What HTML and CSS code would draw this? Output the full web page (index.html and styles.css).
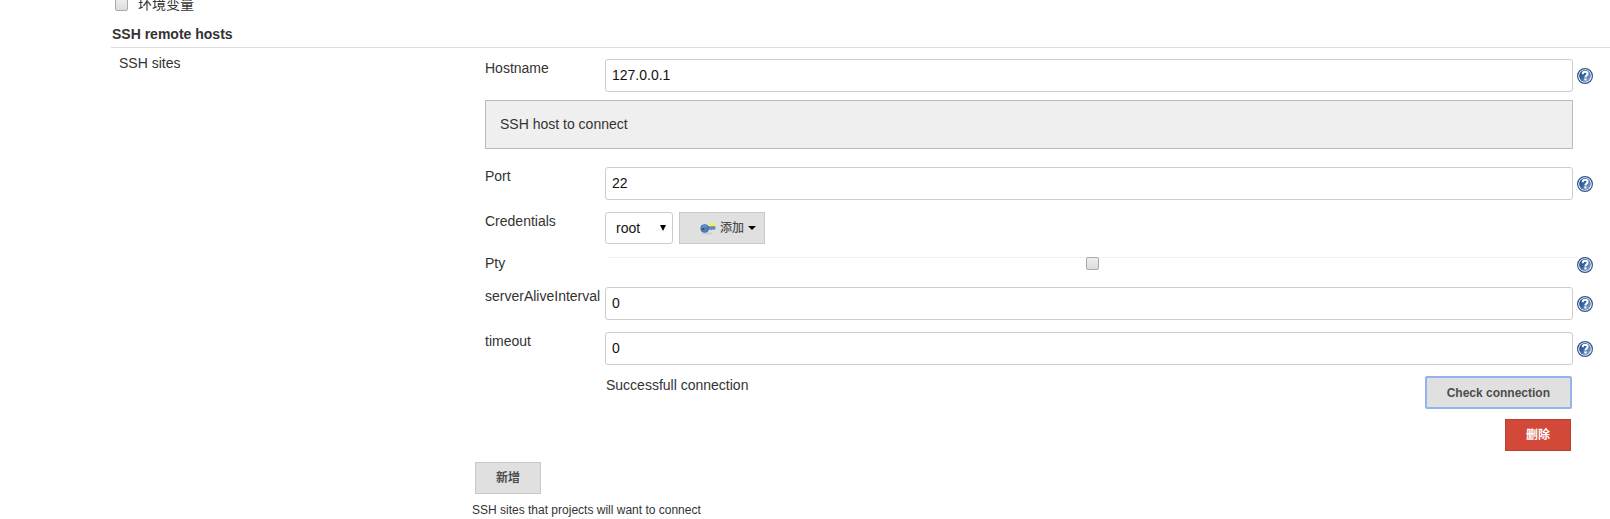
FILE: index.html
```
<!DOCTYPE html>
<html lang="zh-CN">
<head>
<meta charset="utf-8">
<title>SSH remote hosts</title>
<link rel="stylesheet" href="styles.css">
</head>
<body>
<svg class="defs" aria-hidden="true">
  <defs>
    <linearGradient id="disc" x1="0" y1="0" x2="1" y2="1">
      <stop offset="0.2" stop-color="#234f8c"/>
      <stop offset="0.5" stop-color="#426ca5"/>
      <stop offset="1" stop-color="#a3bbdb"/>
    </linearGradient>
    <symbol id="help" viewBox="0 0 16 16">
      <circle cx="8" cy="8" r="7.4" fill="#fff" stroke="#2c5591" stroke-width="1.2"/>
      <circle cx="8" cy="8" r="5.9" fill="url(#disc)"/>
      <path d="M5.600 6.200C5.700 4.600 6.700 3.800 8.100 3.800c1.500 0 2.500.8 2.500 2.100 0 1.600-2.200 1.700-2.200 3.500" fill="none" stroke="#fff" stroke-width="2"/>
      <path d="M7.300 10.400h2.200v2H7.300z" fill="#fff"/>
    </symbol>
  </defs>
</svg>
<main class="config">
  <label class="env"><input class="check" type="checkbox"><span>环境变量</span></label>
  <h2 class="section-title">SSH remote hosts</h2>
  <div class="section">
    <div class="section-name">SSH sites</div>
    <div class="sites">
      <div class="site">
        <div class="row">
          <label class="name" for="hostname">Hostname</label>
          <input class="text" id="hostname" type="text" value="127.0.0.1">
          <button class="help" type="button" aria-label="Help: Hostname"><svg><use href="#help"/></svg></button>
        </div>
        <div class="help-text">SSH host to connect</div>
        <div class="row">
          <label class="name" for="port">Port</label>
          <input class="text" id="port" type="text" value="22">
          <button class="help" type="button" aria-label="Help: Port"><svg><use href="#help"/></svg></button>
        </div>
        <div class="row">
          <label class="name" for="credentials">Credentials</label>
          <div class="credentials">
            <div class="picker">
              <select class="select" id="credentials"><option>root</option></select>
              <svg class="picker-arrow" viewBox="0 0 6 6" aria-hidden="true"><path d="M0 0h6L3 6z"/></svg>
            </div>
            <button class="button add" type="button">
              <svg class="key" viewBox="0 0 16 16" aria-hidden="true">
                <ellipse cx="7" cy="13.500" rx="5.500" ry="1.200" fill="#cfcfcf"/>
                <path d="M9.500 2l1.800 1.200L13 1.500l.6 2.200 2.200.3-1.300 2 .8 2-3-.7-2 .9-.4-2.500-1.500-1.200z" fill="#f3ec6b"/>
                <path d="M7 6.700h8v2l-1 1-1.200-.8-1.300.9-1.200-.5H7z" fill="#5d8fc9" stroke="#41699f" stroke-width=".6"/>
                <circle cx="4.700" cy="8.500" r="4" fill="#4c7dba" stroke="#3b659d" stroke-width=".6"/>
                <path d="M2.500 7.200c1-1.500 3-1.700 4.200-.7" fill="none" stroke="#8db4e0"/>
                <circle cx="3" cy="9" r="1" fill="#2d5182"/>
              </svg>
              <span>添加</span>
              <svg class="caret" viewBox="0 0 8 4" aria-hidden="true"><path d="M0 0h8L4 4z"/></svg>
            </button>
          </div>
        </div>
        <div class="row pty">
          <label class="name" for="pty">Pty</label>
          <div class="pty-field"><input class="check" id="pty" type="checkbox"></div>
          <button class="help" type="button" aria-label="Help: Pty"><svg><use href="#help"/></svg></button>
        </div>
        <div class="row">
          <label class="name" for="alive">serverAliveInterval</label>
          <input class="text" id="alive" type="text" value="0">
          <button class="help" type="button" aria-label="Help: serverAliveInterval"><svg><use href="#help"/></svg></button>
        </div>
        <div class="row">
          <label class="name" for="timeout">timeout</label>
          <input class="text" id="timeout" type="text" value="0">
          <button class="help" type="button" aria-label="Help: timeout"><svg><use href="#help"/></svg></button>
        </div>
        <div class="actions">
          <output class="status">Successfull connection</output>
          <button class="button focused" type="button">Check connection</button>
        </div>
        <div class="remove"><button class="button danger" type="button">删除</button></div>
      </div>
      <button class="button new" type="button">新增</button>
      <p class="note">SSH sites that projects will want to connect</p>
    </div>
  </div>
</main>
</body>
</html>
```
FILE: styles.css
```
* { box-sizing: border-box; }

body {
  margin: 0;
  background: #fff;
  color: #333;
  font: 14px/18px "Liberation Sans", "Noto Sans CJK SC", Arial, sans-serif;
  overflow: hidden;
}

input, select, button { margin: 0; font-family: inherit; }

.defs { position: absolute; width: 0; height: 0; }

.config { margin: -6px 0 0 111px; }

.env {
  display: flex;
  align-items: center;
  gap: 10px;
  height: 20px;
  padding-left: 4px;
}

.check {
  appearance: none;
  display: block;
  width: 13px;
  height: 13px;
  border: 1px solid #aaa;
  border-radius: 2px;
  background: linear-gradient(#eee, #dcdcdc);
}

.check:checked { background: #4d7ebb; }

.section-title {
  margin: 0;
  padding: 11px 1px 4px;
  border-bottom: 1px solid #ddd;
  font-size: 14px;
  line-height: 18px;
}

.section {
  display: grid;
  grid-template-columns: 361px 1fr;
}

.section-name { padding: 6px 8px; }

.sites { padding-top: 11px; }

.site {
  display: flex;
  flex-direction: column;
  gap: 12px;
  padding-left: 13px;
}

.row {
  display: grid;
  grid-template-columns: 120px 1fr 16px;
  padding-right: 17px;
  align-items: start;
}

.text {
  width: calc(100% - 4px);
  height: 33px;
  padding: 0 6px 2px;
  border: 1px solid #ccc;
  border-radius: 3px;
  background: #fff;
  color: #111;
  font-size: 14px;
}

.help {
  display: block;
  align-self: center;
  width: 16px;
  height: 16px;
  padding: 0;
  border: 0;
  background: none;
}

.help svg { display: block; width: 16px; height: 16px; }

.help-text {
  margin: -4px 37px 6px 0;
  padding: 14px;
  border: 1px solid #bbb;
  background: #efefef;
  line-height: 19px;
}

.credentials { display: flex; gap: 6px; }

.picker { position: relative; }

.select {
  appearance: none;
  display: block;
  width: 68px;
  height: 32px;
  padding: 0 10px;
  border: 1px solid #ccc;
  border-radius: 3px;
  background: #fff;
  color: #111;
  font-size: 14px;
}

.picker-arrow {
  position: absolute;
  top: 13px;
  right: 7px;
  width: 6px;
  height: 6px;
  pointer-events: none;
}

.button {
  height: 32px;
  padding: 0 20px;
  border: 1px solid #c8c8c8;
  background: #e0e0e0;
  color: #4d4d4d;
  font-size: 12px;
  font-weight: bold;
  line-height: 16px;
}

.add {
  display: flex;
  align-items: center;
  gap: 4px;
  width: 86px;
  font-weight: 500;
}

.key { flex: none; width: 16px; height: 16px; }

.add span { flex: none; }

.caret { flex: none; width: 8px; height: 4px; fill: #000; }

.pty { min-height: 18px; margin-top: 1px; }

.pty-field {
  display: flex;
  justify-content: center;
  margin-left: 3px;
  border-top: 1px solid #f2f2f2;
}

.pty-field .check { margin-top: -1px; }

.pty .name { margin-top: -3px; }

.pty .help { align-self: start; }

.actions {
  display: flex;
  justify-content: space-between;
  align-items: flex-start;
  margin-top: -1px;
  padding: 0 38px 0 121px;
}

.focused {
  height: 33px;
  border: 2px solid #93b3ee;
  border-radius: 2px;
}

.remove {
  display: flex;
  justify-content: flex-end;
  margin-top: -2px;
  padding-right: 39px;
}

.danger {
  border-color: #b94034;
  background: #d24939;
  color: #fff;
}

.new { display: block; margin: 11px 0 0 3px; }

.note {
  margin: 8px 0 0;
  font-size: 12px;
  line-height: 16px;
}
```
